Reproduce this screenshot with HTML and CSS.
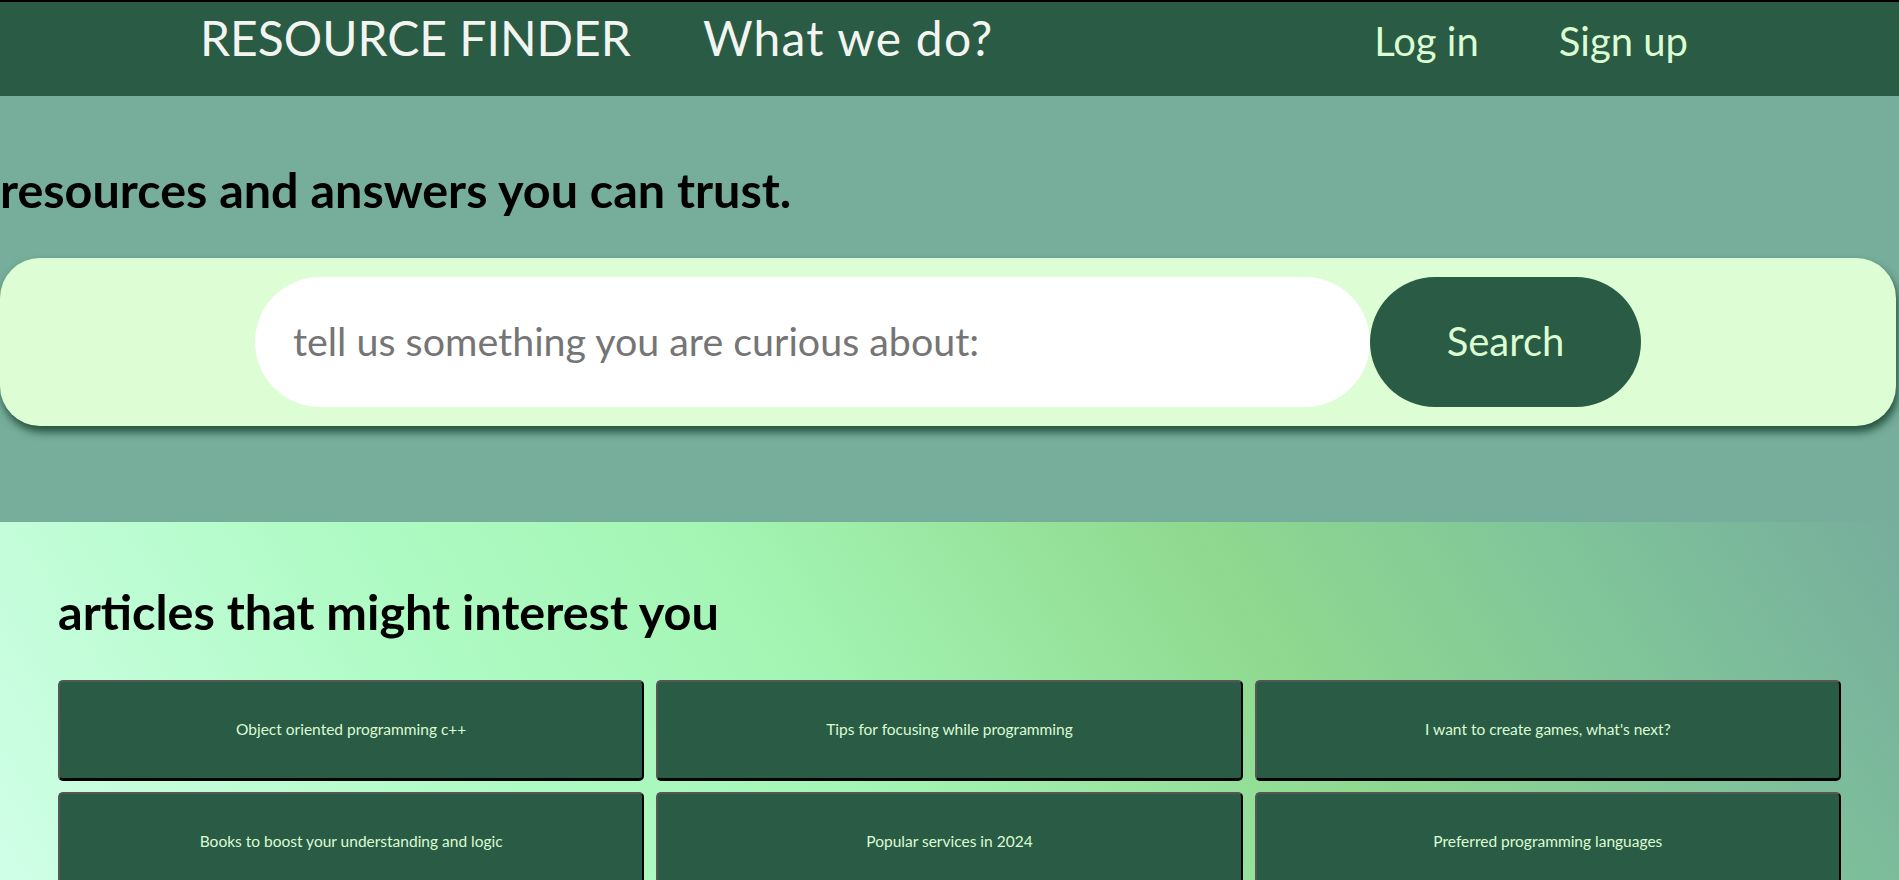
FILE: index.html
```html
<!DOCTYPE html>
<html lang="en">
<head>
<meta charset="utf-8">
<title>Resource Finder</title>
<link rel="stylesheet" href="styles.css">
</head>
<body>
<header class="topbar">
  <div class="left-nav">
    <a class="brand" href="#">RESOURCE FINDER</a>
    <a class="nav-main" href="#">What we do?</a>
  </div>
  <div class="right-nav">
    <a class="nav-auth" href="#">Log in</a>
    <a class="nav-auth" href="#">Sign up</a>
  </div>
</header>

<section class="hero">
  <h2 class="hero-title">resources and answers you can trust.</h2>
  <form class="search-bar">
    <input class="search-input" type="text" placeholder="tell us something you are curious about:">
    <button class="search-btn" type="button">Search</button>
  </form>
</section>

<section class="articles">
  <h2 class="articles-title">articles that might interest you</h2>
  <div class="card-grid">
    <a class="card" href="#">Object oriented programming c++</a>
    <a class="card" href="#">Tips for focusing while programming</a>
    <a class="card" href="#">I want to create games, what's next?</a>
    <a class="card" href="#">Books to boost your understanding and logic</a>
    <a class="card" href="#">Popular services in 2024</a>
    <a class="card" href="#">Preferred programming languages</a>
  </div>
</section>
</body>
</html>
```

FILE: styles.css
```css
* { box-sizing: border-box; }

body {
  margin: 0;
  font-family: "Lato", "Noto Sans", sans-serif;
  background: #c8fde0;
}

a { text-decoration: none; }

.topbar {
  height: 96px;
  border-top: 2px solid #000;
  background: #295b45;
  display: flex;
  align-items: baseline;
  justify-content: space-between;
  padding: 7px 211px 0 200px;
}

.left-nav, .right-nav {
  display: flex;
  align-items: baseline;
}

.left-nav { gap: 72px; }
.right-nav { gap: 80px; }

.brand, .nav-main {
  color: #f2f4f0;
  font-size: 48px;
  font-weight: 400;
}

.nav-main { letter-spacing: 1.2px; }

.nav-auth {
  color: #dcfcd2;
  font-size: 40px;
}

.hero {
  background: #77ae9b;
  padding: 64px 0 96px;
}

.hero-title {
  margin: 0 0 40px;
  font-size: 48.5px;
  font-weight: 700;
  color: #000;
  line-height: 1.2;
}

.search-bar {
  margin: 0 3px 0 0;
  height: 168px;
  background: #ddfdd5;
  border-radius: 40px;
  box-shadow: 2px 6px 8px rgba(25, 70, 50, 0.9);
  display: flex;
  align-items: center;
  justify-content: center;
}

.search-input {
  width: 1115px;
  height: 130px;
  border: none;
  outline: none;
  border-radius: 65px;
  background: #fff;
  padding: 0 0 4px 38px;
  font-family: inherit;
  font-size: 39.4px;
  color: #333;
}

.search-input::placeholder { color: #757575; }

.search-btn {
  width: 271px;
  height: 130px;
  border: none;
  border-radius: 65px;
  background: #295b45;
  color: #dcfcd2;
  font-family: inherit;
  font-size: 40px;
  padding-bottom: 4px;
  cursor: pointer;
}

.articles {
  min-height: 400px;
  padding: 60px 58px 40px;
  background: linear-gradient(58deg, #d2ffe9 0%, #b0fbc6 26%, #a4f5b4 44%, #8fd98f 67%, #80c49a 84%, #76ad9c 100%);
}

.articles-title {
  margin: 0 0 39px;
  font-size: 48.6px;
  font-weight: 700;
  color: #000;
  line-height: 1.2;
}

.card-grid {
  display: grid;
  grid-template-columns: repeat(3, 1fr);
  gap: 11px 12px;
}

.card {
  height: 101px;
  display: flex;
  align-items: center;
  justify-content: center;
  background: #295b45;
  color: #dcfcd2;
  font-size: 15.5px;
  padding-bottom: 2px;
  border: 2px solid;
  border-color: #565656 #000 #000 #565656;
  border-bottom-width: 3px;
  border-radius: 5px;
}
```
